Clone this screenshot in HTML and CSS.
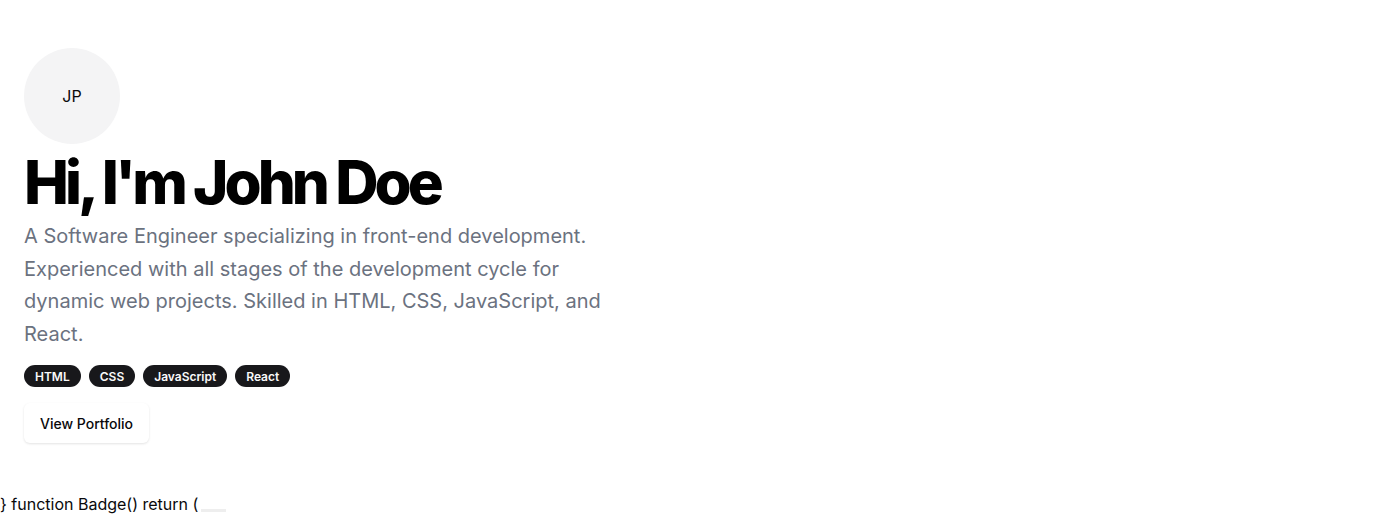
FILE: index.html
```html
<!DOCTYPE html>
<html lang="en">
<head>
<meta charset="utf-8">
<title>John Doe</title>
<link rel="stylesheet" href="styles.css">
</head>
<body>
<main class="hero">
  <div class="avatar">JP</div>
  <h1 class="title">Hi, I'm John Doe</h1>
  <p class="lead">A Software Engineer specializing in front-end development. Experienced with all stages of the development cycle for dynamic web projects. Skilled in HTML, CSS, JavaScript, and React.</p>
  <div class="badges">
    <span class="badge">HTML</span>
    <span class="badge">CSS</span>
    <span class="badge">JavaScript</span>
    <span class="badge">React</span>
  </div>
  <button class="btn">View Portfolio</button>
</main>
<div class="leftover">} function Badge() return (<span class="ghost"></span></div>
</body>
</html>
```
FILE: styles.css
```css
* { box-sizing: border-box; }
html, body { margin: 0; padding: 0; background: #fff; }
body {
  font-family: Inter, "Noto Sans", sans-serif;
  color: #09090b;
}
.hero {
  display: flex;
  flex-direction: column;
  align-items: flex-start;
  padding: 48px 24px 48px;
}
.avatar {
  width: 96px;
  height: 96px;
  border-radius: 50%;
  background: #f4f4f5;
  display: flex;
  align-items: center;
  justify-content: center;
  font-size: 16px;
  color: #09090b;
}
.title {
  margin: 8px 0 0;
  font-size: 60px;
  line-height: 60px;
  font-weight: 800;
  letter-spacing: -0.066em;
  color: #000;
}
.lead {
  margin: 8px 0 0;
  max-width: 600px;
  font-size: 20px;
  line-height: 32.5px;
  color: #6b7280;
}
.badges {
  display: flex;
  gap: 8px;
  margin-top: 15px;
}
.badge {
  display: inline-flex;
  align-items: center;
  height: 22px;
  padding: 0 10px;
  border: 1px solid transparent;
  border-radius: 9999px;
  background: #18181b;
  color: #fafafa;
  font-size: 12px;
  font-weight: 600;
}
.btn {
  margin-top: 16px;
  height: 40px;
  padding: 0 16px;
  border: none;
  border-radius: 6px;
  background: #fff;
  box-shadow: 0 1px 3px rgba(0,0,0,0.08), 0 1px 2px rgba(0,0,0,0.04);
  font-family: inherit;
  font-size: 14px;
  font-weight: 500;
  color: #09090b;
  cursor: pointer;
}
.leftover {
  margin-top: 1px;
  font-size: 16px;
  line-height: 24px;
  color: #09090b;
}
.ghost {
  display: inline-block;
  width: 25px;
  height: 3px;
  margin-left: 3px;
  background: #eeeeee;
  vertical-align: -2px;
}
```
